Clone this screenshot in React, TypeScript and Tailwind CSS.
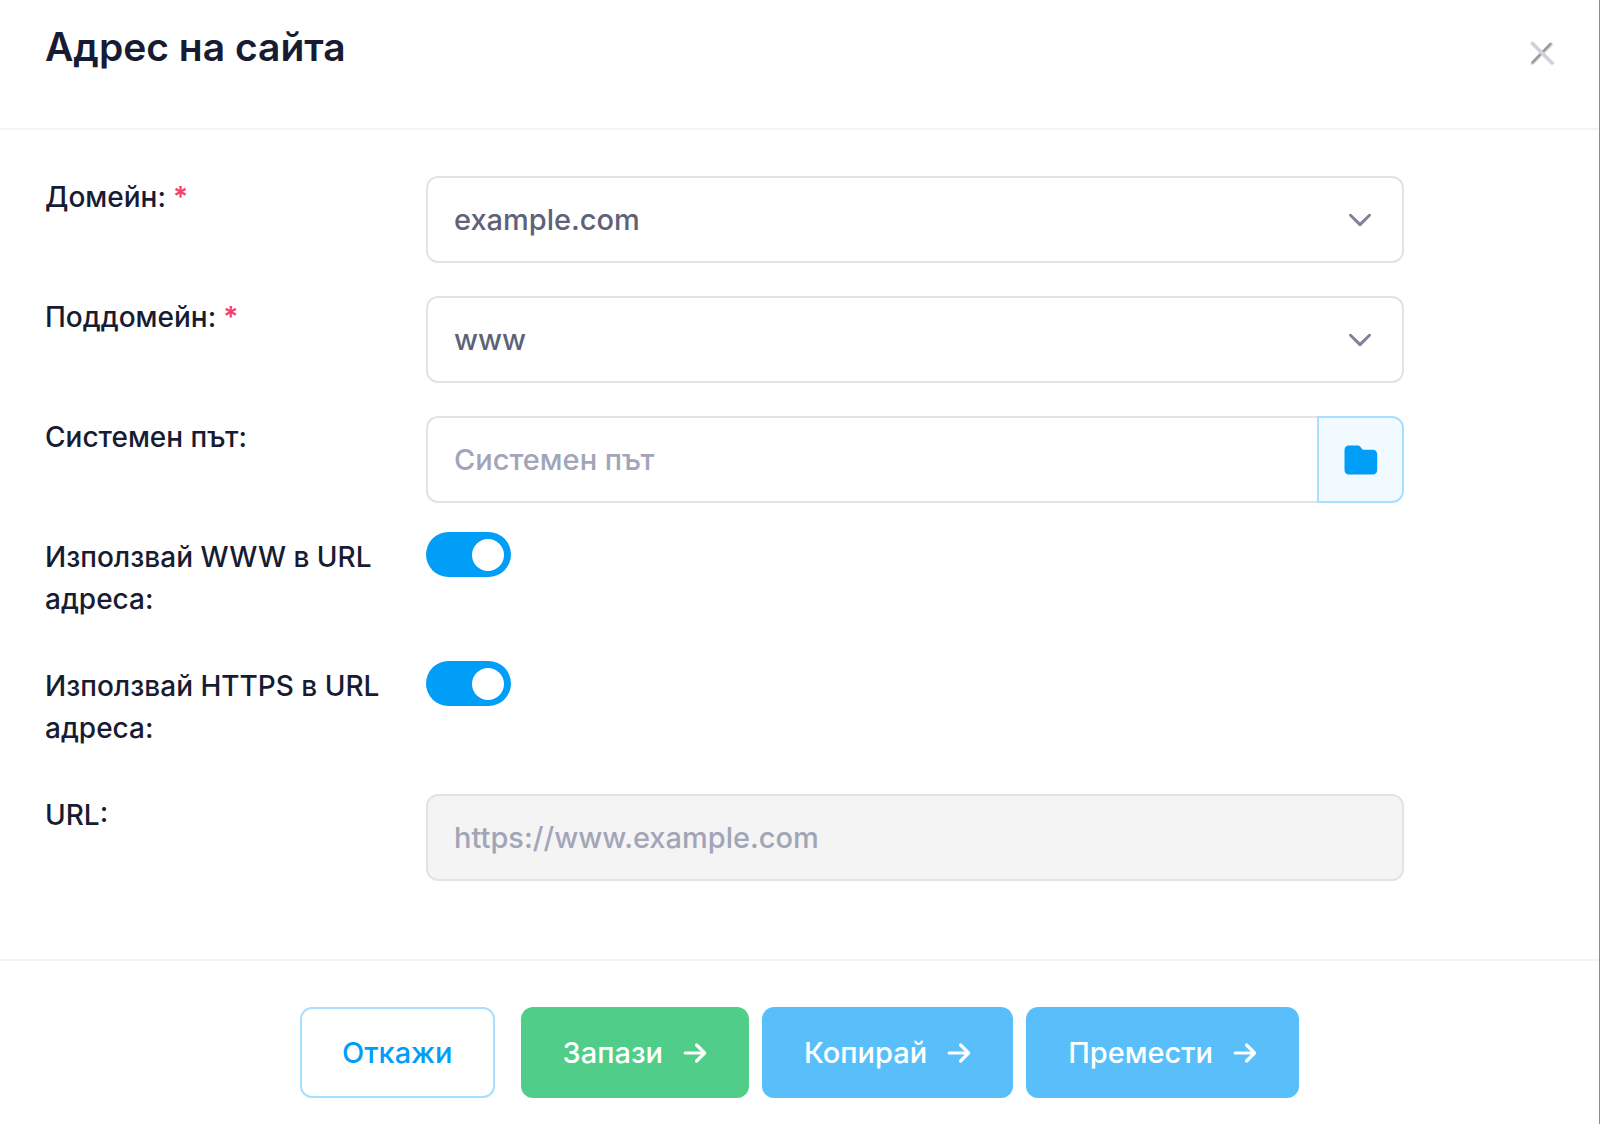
import { useState } from 'react';
import type { ReactNode } from 'react';

interface RowProps {
    id: string;
    label: string;
    required?: boolean;
    children: ReactNode;
}

// Label on the left, control on the right
function Row({ id, label, required, children }: RowProps) {
    return (
        <div className="flex items-start">
            <label htmlFor={id} className="w-1/4 pr-[38px] pb-3 text-[28px] leading-[42px] text-[#181c32]">
                {label}
                {required && <span className="font-semibold text-[#f1416c]"> *</span>}
            </label>
            <div className="w-2/3 pr-[38px]">{children}</div>
        </div>
    );
}

function Select({ id, options }: { id: string; options: string[] }) {
    return (
        <div className="relative">
            <select
                id={id}
                className="block h-[87px] w-full appearance-none rounded-xl border-2 border-[#e1e3ea] bg-white pl-[26px] pr-20 text-[#5e6278] outline-none"
            >
                {options.map((option) => (
                    <option key={option}>{option}</option>
                ))}
            </select>
            <svg
                viewBox="0 0 24 14"
                className="pointer-events-none absolute inset-y-0 right-8 my-auto h-[14px] w-6"
                fill="none"
                stroke="#7e8299"
                strokeWidth="3"
                strokeLinecap="round"
                strokeLinejoin="round"
                aria-hidden="true"
            >
                <path d="M2.500 2.300 12 11.600 21.500 2.300" />
            </svg>
        </div>
    );
}

function Switch({ id }: { id: string }) {
    const [checked, setChecked] = useState(true);

    return (
        <div className="-mt-1 flex">
            <input
                id={id}
                type="checkbox"
                role="switch"
                checked={checked}
                onChange={(e) => setChecked(e.target.checked)}
                className="h-[45px] w-[85px] cursor-pointer appearance-none rounded-full bg-[#e1e3ea] p-[7px] before:block before:size-8 before:rounded-full before:bg-white checked:bg-[#009ef7] checked:before:ml-auto"
            />
        </div>
    );
}

function Arrow() {
    return (
        <svg
            viewBox="0 0 24 22"
            className="h-[22px] w-6"
            fill="none"
            stroke="currentColor"
            strokeWidth="3.2"
            strokeLinecap="round"
            strokeLinejoin="round"
            aria-hidden="true"
        >
            <path d="M2.200 11h19" />
            <path d="M13.600 3 21.600 11l-8 8" />
        </svg>
    );
}

const buttonBase = 'flex h-[91px] items-center gap-5 rounded-xl';

export default function App() {
    return (
        <div className="min-h-screen border-r border-[#8c8c8c] bg-white font-['Inter',sans-serif] text-[29px] font-medium">
            <header className="flex h-[130px] items-start justify-between border-b-2 border-[#f3f3f4] px-[45px] pt-5">
                <h1 className="text-[39px] leading-[54px] font-semibold text-[#181c32]">Адрес на сайта</h1>
                <button type="button" aria-label="Затвори" className="mt-5">
                    <svg viewBox="0 0 26 26" className="size-[26px]" fill="none" strokeLinecap="round" aria-hidden="true">
                        <path d="M4.500 23.500 23.500 4.500" stroke="#e4e6ee" strokeWidth="3.6" />
                        <path d="M4.500 22.500 22.500 4" stroke="#9b9b9b" strokeWidth="2.6" />
                        <path d="M4.500 3.500 24 23" stroke="#cfd1dc" strokeWidth="3.8" />
                    </svg>
                </button>
            </header>

            <main className="flex flex-col gap-[33px] pt-[46px] pr-[30px] pb-[78px] pl-[45px]">
                <Row id="domain" label="Домейн:" required>
                    <Select id="domain" options={['example.com']} />
                </Row>
                <Row id="subdomain" label="Поддомейн:" required>
                    <Select id="subdomain" options={['www']} />
                </Row>
                <Row id="path" label="Системен път:">
                    <div className="flex h-[87px]">
                        <input
                            id="path"
                            type="text"
                            placeholder="Системен път"
                            className="min-w-0 flex-1 rounded-l-xl border-2 border-r-0 border-[#e1e3ea] px-[26px] text-[#5e6278] outline-none placeholder:text-[#a1a5b7]"
                        />
                        <button
                            type="button"
                            aria-label="Избери папка"
                            className="flex w-[87px] items-center justify-center rounded-r-xl border-2 border-[#a8deff] bg-[#f1faff]"
                        >
                            <svg viewBox="0 0 34 30" className="h-[30px] w-[34px]" fill="#009ef7" aria-hidden="true">
                                <path d="M4.800.500h8.500c1.400 0 2.400.5 3.200 1.400l1.600 2.200c.3.400.6.600 1.100.6h9.700A4.300 4.300 0 0 1 33.200 9v16.200a4.300 4.300 0 0 1-4.300 4.300H4.800A4.300 4.300 0 0 1 .5 25.200V4.800A4.300 4.300 0 0 1 4.800.500z" />
                            </svg>
                        </button>
                    </div>
                </Row>
                <Row id="use-www" label="Използвай WWW в URL адреса:">
                    <Switch id="use-www" />
                </Row>
                <Row id="use-https" label="Използвай HTTPS в URL адреса:">
                    <Switch id="use-https" />
                </Row>
                <Row id="url" label="URL:">
                    <input
                        id="url"
                        type="text"
                        placeholder="https://www.example.com"
                        disabled
                        className="block h-[87px] w-full rounded-xl border-2 border-[#e1e3ea] bg-[#f4f4f4] px-[26px] placeholder:text-[#a1a5b7]"
                    />
                </Row>
            </main>

            <footer className="flex justify-center gap-[13px] border-t-2 border-[#f3f3f4] pt-[46px] pb-[26px]">
                <button type="button" className={`${buttonBase} mr-[13px] border-2 border-[#a8deff] px-10 text-[#009ef7]`}>
                    Откажи
                </button>
                <button type="button" className={`${buttonBase} bg-[#50cd89] px-[42px] text-white`}>
                    Запази
                    <Arrow />
                </button>
                <button type="button" className={`${buttonBase} bg-[#59bffa] px-[42px] text-white`}>
                    Копирай
                    <Arrow />
                </button>
                <button type="button" className={`${buttonBase} bg-[#59bffa] px-[42px] text-white`}>
                    Премести
                    <Arrow />
                </button>
            </footer>
        </div>
    );
}
